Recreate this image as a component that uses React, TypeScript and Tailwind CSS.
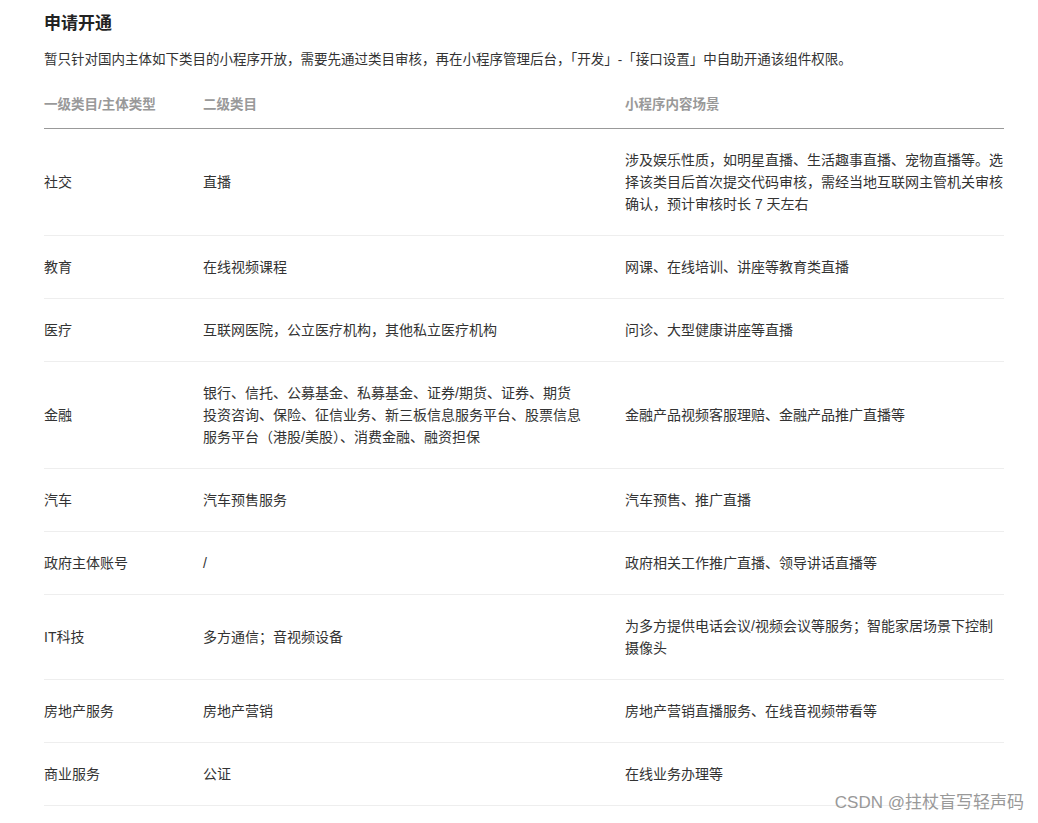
const rows: [string, string[], string[]][] = [
  ["社交", ["直播"], ["涉及娱乐性质，如明星直播、生活趣事直播、宠物直播等。选", "择该类目后首次提交代码审核，需经当地互联网主管机关审核", "确认，预计审核时长 7 天左右"]],
  ["教育", ["在线视频课程"], ["网课、在线培训、讲座等教育类直播"]],
  ["医疗", ["互联网医院，公立医疗机构，其他私立医疗机构"], ["问诊、大型健康讲座等直播"]],
  ["金融", ["银行、信托、公募基金、私募基金、证券/期货、证券、期货", "投资咨询、保险、征信业务、新三板信息服务平台、股票信息", "服务平台（港股/美股）、消费金融、融资担保"], ["金融产品视频客服理赔、金融产品推广直播等"]],
  ["汽车", ["汽车预售服务"], ["汽车预售、推广直播"]],
  ["政府主体账号", ["/"], ["政府相关工作推广直播、领导讲话直播等"]],
  ["IT科技", ["多方通信；音视频设备"], ["为多方提供电话会议/视频会议等服务；智能家居场景下控制", "摄像头"]],
  ["房地产服务", ["房地产营销"], ["房地产营销直播服务、在线音视频带看等"]],
  ["商业服务", ["公证"], ["在线业务办理等"]],
];

export default function App() {
  return (
    <div className="relative w-[1038px] h-[823px] bg-white overflow-hidden text-[#333]" style={{ fontFamily: '"Liberation Sans", "Noto Sans CJK SC", sans-serif' }}>
      <div className="pl-[44px] pr-[34px]">
        <h1 className="pt-[12px] text-[17px] leading-[24px] font-bold text-[#222]">申请开通</h1>
        <p className="mt-[12px] text-[13.5px] leading-[24px] whitespace-nowrap">暂只针对国内主体如下类目的小程序开放，需要先通过类目审核，再在小程序管理后台，「开发」-「接口设置」中自助开通该组件权限。</p>
        <div className="mt-[11px] text-[14px]">
          <div className="flex h-[46px] items-center border-b border-[#999] font-bold text-[#999] text-[13.5px]">
            <div className="w-[159px]">一级类目/主体类型</div>
            <div className="w-[422px]">二级类目</div>
            <div className="flex-1">小程序内容场景</div>
          </div>
          {rows.map(([a, b, c], i) => (
            <div key={i} className="flex items-center border-b border-[#eee] py-[20px] leading-[22px]">
              <div className="w-[159px]">{a}</div>
              <div className="w-[422px] whitespace-nowrap">{b.map((t, j) => <div key={j}>{t}</div>)}</div>
              <div className="flex-1 whitespace-nowrap">{c.map((t, j) => <div key={j}>{t}</div>)}</div>
            </div>
          ))}
        </div>
      </div>
      <div className="absolute right-[14px] bottom-[8px] text-[17px] text-[#999]">CSDN @拄杖盲写轻声码</div>
    </div>
  );
}
